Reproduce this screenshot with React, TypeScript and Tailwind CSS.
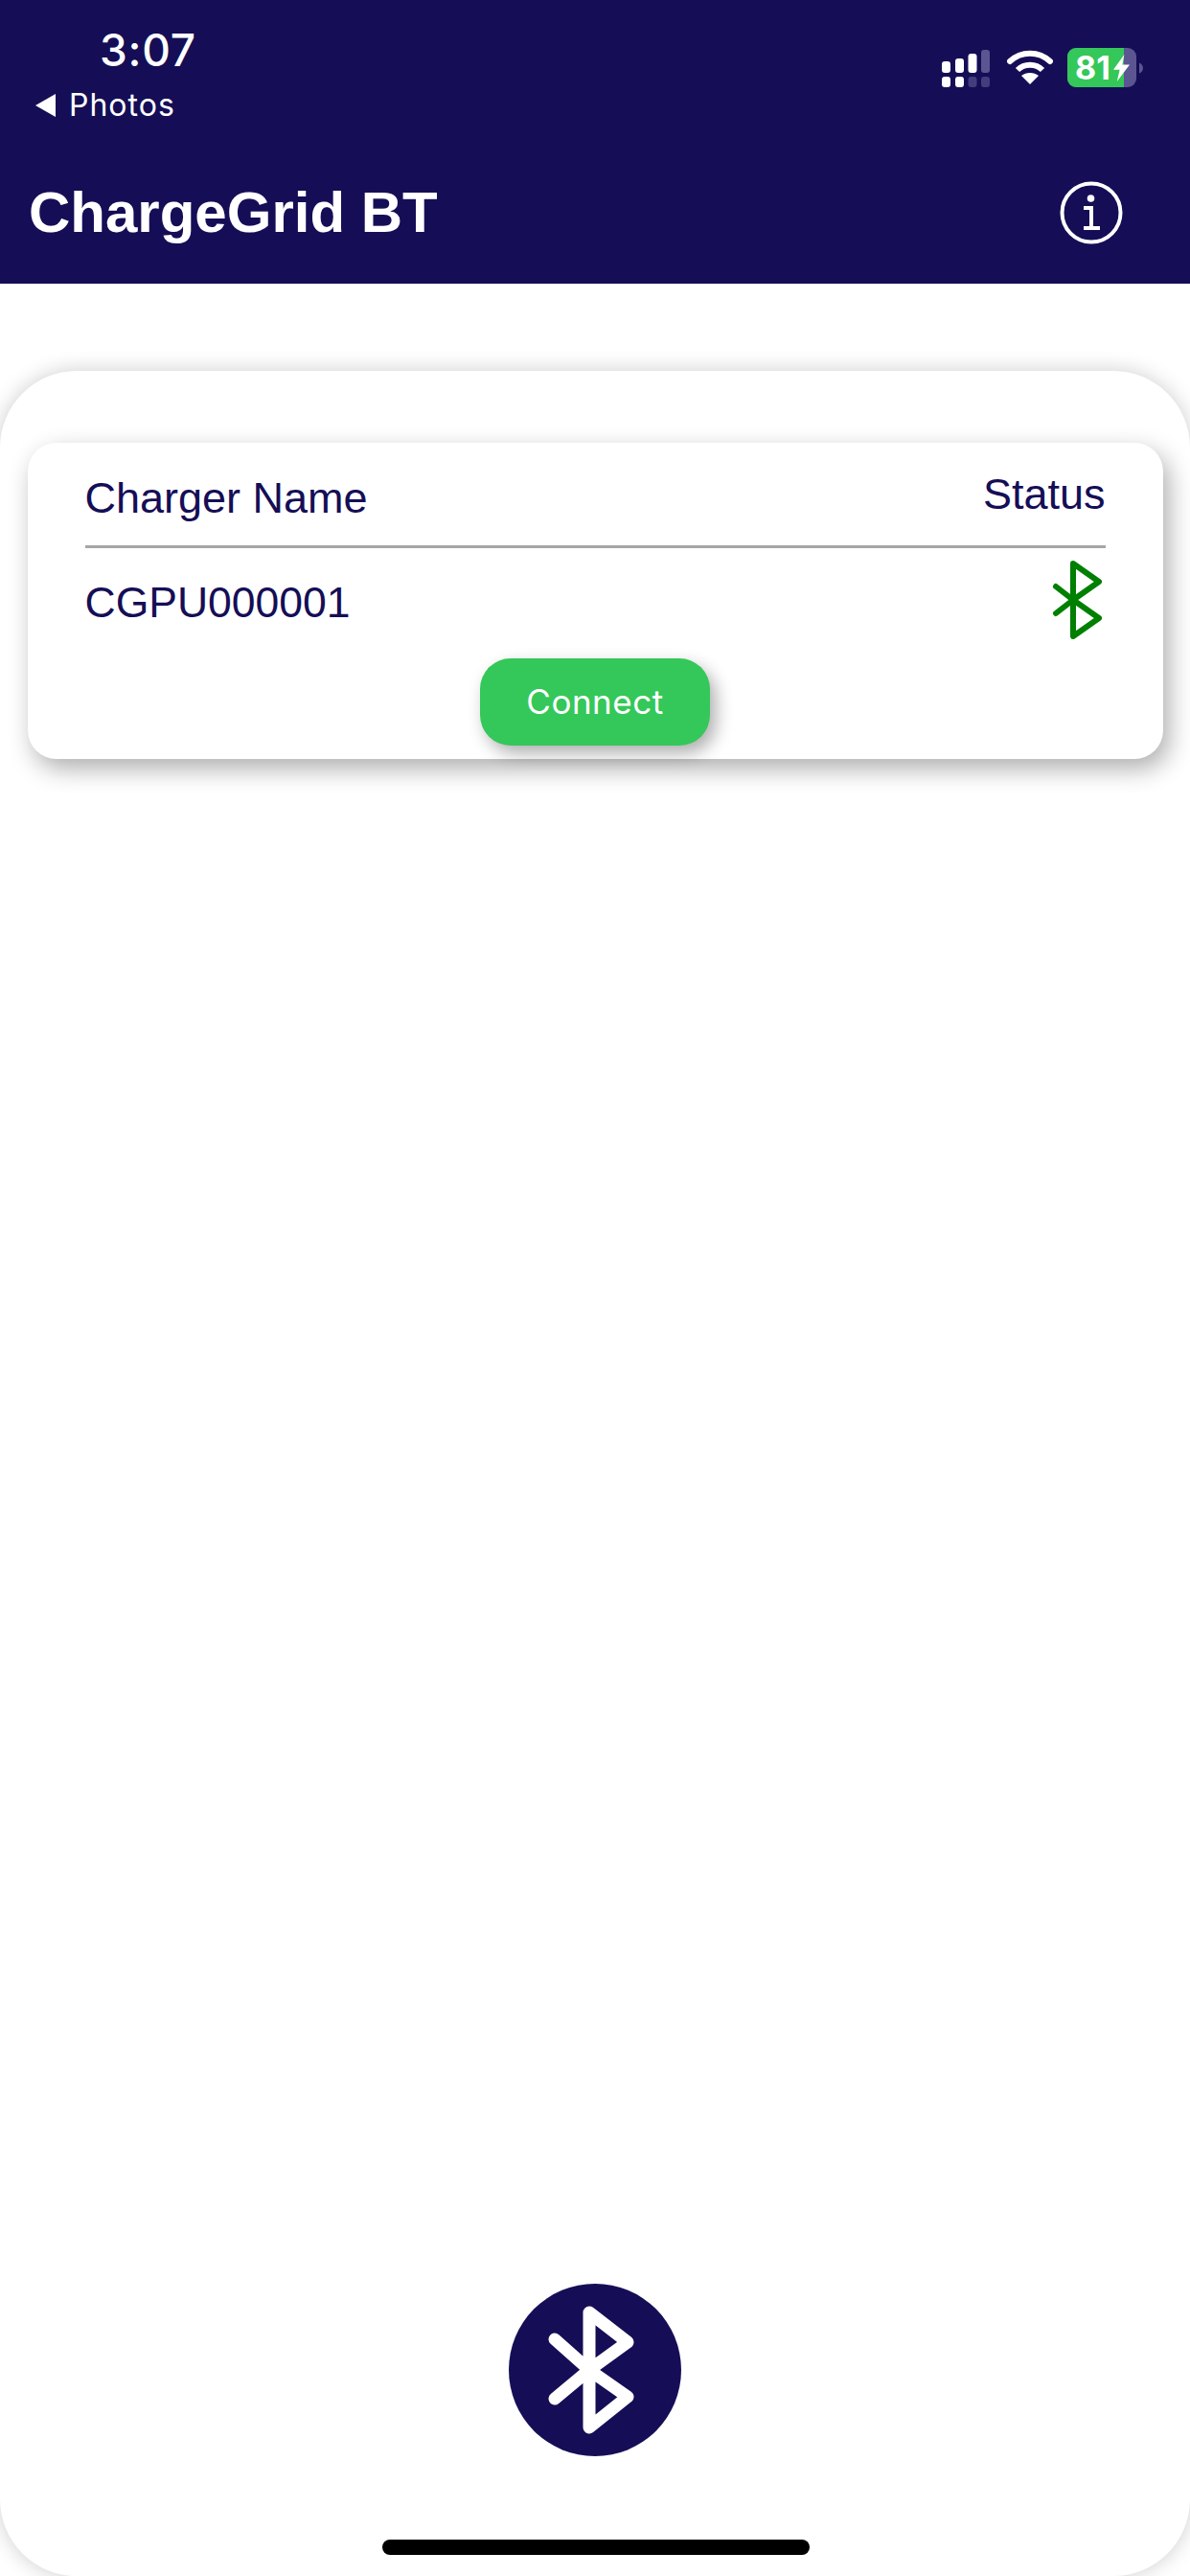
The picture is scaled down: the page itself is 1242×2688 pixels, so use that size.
export default function App() {
  return (
    <div className="w-[1242px] h-[2688px] bg-white overflow-hidden flex flex-col relative font-['Liberation_Sans',sans-serif]">
      <header className="h-[296px] bg-[#150e56] shrink-0 flex flex-col text-white">
        <div className="flex justify-between h-[130px]">
          <div className="pl-[36px] pt-[24px] flex flex-col">
            <div className="pl-[68px] text-[46px] leading-[56px] font-medium font-['Inter',sans-serif] tracking-[0.7px]">3:07</div>
            <div className="flex items-center gap-[13px] mt-[11px]">
              <svg width="23" height="26" viewBox="0 0 23 26"><path d="M22 1 V25 L1 13 Z" fill="#fff" /></svg>
              <span className="text-[32px] leading-[38px] font-['Inter',sans-serif] tracking-[1px]">Photos</span>
            </div>
          </div>
          <div className="pr-[49px] pt-[50px] flex items-start">
            <svg width="50" height="39" viewBox="0 0 50 39" className="mt-[2px] mr-[18px]">
              <rect x="0" y="12" width="9" height="12" rx="3" fill="#fff" />
              <rect x="14" y="9" width="9" height="15" rx="3" fill="#fff" />
              <rect x="27.5" y="4" width="9" height="20" rx="3" fill="#fff" />
              <rect x="41" y="0" width="9" height="24" rx="3" fill="#5b5691" />
              <rect x="0" y="28" width="9" height="11" rx="3" fill="#fff" />
              <rect x="14" y="28" width="9" height="11" rx="3" fill="#fff" />
              <rect x="27.5" y="28" width="9" height="11" rx="3" fill="#433d7e" />
              <rect x="41" y="28" width="9" height="11" rx="3" fill="#433d7e" />
            </svg>
            <svg width="48" height="36" viewBox="0 0 48 36" className="mt-[2px] mr-[15px]">
              <path d="M3 12 C15 1 33 1 45 12" fill="none" stroke="#fff" strokeWidth="6" strokeLinecap="round" />
              <path d="M11 21 C18 14 30 14 37 21" fill="none" stroke="#fff" strokeWidth="6" />
              <path d="M24 36 L15 27 C20 23 28 23 33 27 Z" fill="#fff" />
            </svg>
            <div className="flex items-center gap-[3px]">
              <div className="relative w-[72px] h-[41px] rounded-[9px] bg-[#5b5691] overflow-hidden">
                <div className="h-full w-[59px] bg-[#34c759] flex items-center pl-[8px]">
                  <span className="text-[34px] leading-[41px] font-bold font-['Inter',sans-serif] text-white">81</span>
                </div>
                <svg width="17" height="28" viewBox="0 0 18 32" preserveAspectRatio="none" className="absolute left-[48px] top-[7px]">
                  <path d="M12 0 L0 18 H7 L4 32 L18 12 H10 Z" fill="#fff" />
                </svg>
              </div>
              <svg width="4" height="14" viewBox="0 0 5 14"><path d="M0 0 C3 1 5 4 5 7 C5 10 3 13 0 14 Z" fill="#5b5691" /></svg>
            </div>
          </div>
        </div>
        <div className="flex flex-1 items-center justify-between pt-[18px] pl-[30px] pr-[70px]">
          <h1 className="text-[60px] leading-[70px] font-bold">ChargeGrid BT</h1>
          <svg width="66" height="66" viewBox="0 0 66 66" fill="none" stroke="#fff" strokeWidth="4">
            <circle cx="33" cy="33" r="30.5" />
            <circle cx="32.5" cy="18" r="3.8" fill="#fff" stroke="none" />
            <path d="M25 28 H33 V49 M25 49 H42" />
          </svg>
        </div>
      </header>

      <main className="flex-1 mt-[91px] rounded-[80px] bg-white shadow-[0_0_22px_rgba(0,0,0,0.2)] flex flex-col items-center pt-[75px] pb-[125px]">
        <section className="w-[1185px] h-[330px] rounded-[30px] bg-white shadow-[6px_10px_26px_rgba(0,0,0,0.32)] flex flex-col px-[60px]">
          <div className="flex justify-between h-[110px] border-b-[3px] border-[#a6a6a6] text-[#150e56]">
            <span className="text-[45px] leading-[46px] mt-[35px]">Charger Name</span>
            <span className="text-[45px] leading-[46px] mt-[31px]">Status</span>
          </div>
          <div className="flex justify-between items-start text-[#150e56]">
            <span className="text-[44.5px] leading-[46px] mt-[34px]">CGPU000001</span>
            <svg width="54" height="82" viewBox="0 0 54 82" fill="none" stroke="#008000" strokeWidth="6" strokeLinecap="round" strokeLinejoin="round" className="mt-[13px] mr-[3px]">
              <path d="M5 27 L23 41 L50 60 L23 79 V3 L50 22 L23 41 L5 55" />
            </svg>
          </div>
          <div className="flex justify-center mt-auto mb-[14px]">
            <button className="w-[240px] h-[91px] rounded-[32px] bg-[#34c759] text-white text-[35px] tracking-[0.5px] font-['Inter',sans-serif] shadow-[6px_8px_18px_rgba(0,0,0,0.32)]">Connect</button>
          </div>
        </section>
        <div className="mt-auto w-[180px] h-[180px] rounded-full bg-[#150e56] flex items-center justify-center">
          <svg width="90" height="134" viewBox="0 0 90 134" fill="none" stroke="#fff" strokeWidth="13" strokeLinecap="round" strokeLinejoin="round" className="mr-[8px]">
            <path d="M7 35 L43 67 L83 95 L43 127 V7 L83 38 L43 67 L7 97" />
          </svg>
        </div>
      </main>
      <div className="absolute left-[399px] top-[2650px] w-[446px] h-[16px] rounded-full bg-black" />
    </div>
  );
}
